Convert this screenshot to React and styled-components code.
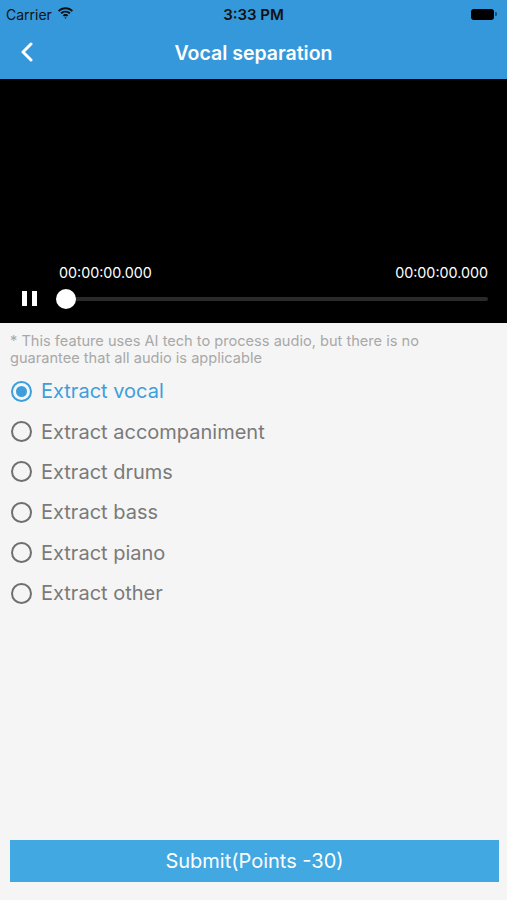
import React, { useState } from "react";
import styled, { createGlobalStyle } from "styled-components";

const GlobalStyle = createGlobalStyle`
  html, body {
    margin: 0;
    padding: 0;
    background: #f5f5f5;
  }
  body {
    font-family: Inter, "Liberation Sans", Arial, sans-serif;
  }
`;

const options = [
  "Extract vocal",
  "Extract accompaniment",
  "Extract drums",
  "Extract bass",
  "Extract piano",
  "Extract other",
];

const App = () => {
  const [selected, setSelected] = useState(0);

  return (
    <Page>
      <GlobalStyle />
      <Header>
        <StatusBar>
          <Carrier>
            Carrier
            <svg width="17" height="12" viewBox="0 0 17 12">
              <path d="M8.5 2.2c2.4 0 4.6.9 6.2 2.5l1.3-1.3C14 1.4 11.4.3 8.5.3S3 1.4 1 3.4l1.3 1.3C3.9 3.1 6.1 2.2 8.5 2.2z" fill="#111" />
              <path d="M8.5 5.6c1.5 0 2.8.6 3.8 1.5l1.3-1.3C12.3 4.5 10.5 3.7 8.5 3.7S4.7 4.5 3.4 5.8l1.3 1.3c1-.9 2.3-1.5 3.8-1.5z" fill="#111" />
              <path d="M8.5 8.9c.6 0 1.1.2 1.5.6l1.3-1.3c-.7-.7-1.700-1.2-2.8-1.2s-2.1.5-2.8 1.2L7 9.5c.4-.4.9-.6 1.5-.6zM8.5 11.8l1.1-1.1c-.3-.3-.7-.5-1.1-.5s-.8.2-1.1.5z" fill="#111" />
            </svg>
          </Carrier>
          <Clock>3:33 PM</Clock>
          <Battery>
            <BatteryBody />
            <BatteryCap />
          </Battery>
        </StatusBar>
        <NavBar>
          <BackButton>
            <svg width="14" height="20" viewBox="0 0 14 20">
              <path d="M11 2 L3 10 L11 18" fill="none" stroke="#fff" strokeWidth="3" strokeLinecap="round" strokeLinejoin="round" />
            </svg>
          </BackButton>
          <Title>Vocal separation</Title>
        </NavBar>
      </Header>

      <Player>
        <Times>
          <span>00:00:00.000</span>
          <span>00:00:00.000</span>
        </Times>
        <Controls>
          <PauseIcon>
            <i />
            <i />
          </PauseIcon>
          <Track>
            <Knob />
          </Track>
        </Controls>
      </Player>

      <Note>
        * This feature uses AI tech to process audio, but there is no guarantee that all audio is applicable
      </Note>

      <OptionList>
        {options.map((label, i) => (
          <Option key={label} $active={selected === i} onClick={() => setSelected(i)}>
            <Radio $active={selected === i} />
            {label}
          </Option>
        ))}
      </OptionList>

      <Submit>Submit(Points -30)</Submit>
    </Page>
  );
};

export default App;

const Page = styled.div`
  min-height: 900px;
  display: flex;
  flex-direction: column;
  background: #f5f5f5;
`;

const Header = styled.div`
  background: #3498db;
`;

const StatusBar = styled.div`
  height: 28px;
  display: flex;
  align-items: center;
  justify-content: space-between;
  padding: 0 10px 0 6px;
  position: relative;
`;

const Carrier = styled.div`
  display: flex;
  align-items: center;
  gap: 5px;
  font-size: 14px;
  color: #111;
  svg {
    margin-top: -2px;
  }
`;

const Clock = styled.div`
  position: absolute;
  left: 0;
  right: 0;
  text-align: center;
  font-size: 15px;
  font-weight: 600;
  color: #111;
`;

const Battery = styled.div`
  display: flex;
  align-items: center;
`;

const BatteryBody = styled.div`
  width: 21px;
  height: 9px;
  border-radius: 3px;
  background: #000;
  border: 1.5px solid rgba(0, 0, 0, 0.45);
`;

const BatteryCap = styled.div`
  width: 2px;
  height: 4px;
  margin-left: 1px;
  border-radius: 0 1px 1px 0;
  background: rgba(0, 0, 0, 0.45);
`;

const NavBar = styled.div`
  height: 51px;
  display: flex;
  align-items: center;
  justify-content: center;
  position: relative;
`;

const BackButton = styled.div`
  position: absolute;
  left: 20px;
  top: 14px;
  display: flex;
`;

const Title = styled.div`
  color: #fff;
  font-size: 19.5px;
  font-weight: 600;
  margin-top: -2px;
`;

const Player = styled.div`
  background: #000;
  height: 244px;
  display: flex;
  flex-direction: column;
  justify-content: flex-end;
  padding-bottom: 17px;
  box-sizing: border-box;
`;

const Times = styled.div`
  display: flex;
  justify-content: space-between;
  padding: 0 19px 0 59px;
  color: #fff;
  font-size: 14.3px;
`;

const Controls = styled.div`
  display: flex;
  align-items: center;
  margin-top: 10px;
  padding: 0 19px 0 22px;
`;

const PauseIcon = styled.div`
  display: flex;
  gap: 5px;
  width: 15px;
  i {
    display: block;
    width: 5px;
    height: 15px;
    background: #fff;
  }
`;

const Track = styled.div`
  flex: 1;
  margin-left: 20px;
  height: 4px;
  background: #2a2a2a;
  border-radius: 2px;
  position: relative;
`;

const Knob = styled.div`
  position: absolute;
  left: -1px;
  top: 50%;
  width: 20px;
  height: 20px;
  margin-top: -10px;
  border-radius: 50%;
  background: #fff;
`;

const Note = styled.div`
  padding: 10px 0 0 10px;
  max-width: 450px;
  font-size: 14.6px;
  line-height: 17px;
  color: #a8a8a8;
`;

const OptionList = styled.div`
  display: flex;
  flex-direction: column;
  padding: 4px 0 0 11px;
`;

const Option = styled.div`
  height: 40.4px;
  display: flex;
  align-items: center;
  gap: 9px;
  font-size: 20px;
  color: ${(p) => (p.$active ? "#3c9fdc" : "#7a7a7a")};
  cursor: pointer;
`;

const Radio = styled.span`
  width: 21px;
  height: 21px;
  border-radius: 50%;
  box-sizing: border-box;
  border: 2px solid ${(p) => (p.$active ? "#3c9fdc" : "#6f6f6f")};
  display: flex;
  align-items: center;
  justify-content: center;
  &::after {
    content: "";
    display: ${(p) => (p.$active ? "block" : "none")};
    width: 11px;
    height: 11px;
    border-radius: 50%;
    background: #3c9fdc;
  }
`;

const Submit = styled.button`
  margin: auto 8px 18px 10px;
  height: 42px;
  border: none;
  background: #41a8e2;
  color: #fff;
  font-family: inherit;
  font-size: 20px;
  padding: 0;
`;
